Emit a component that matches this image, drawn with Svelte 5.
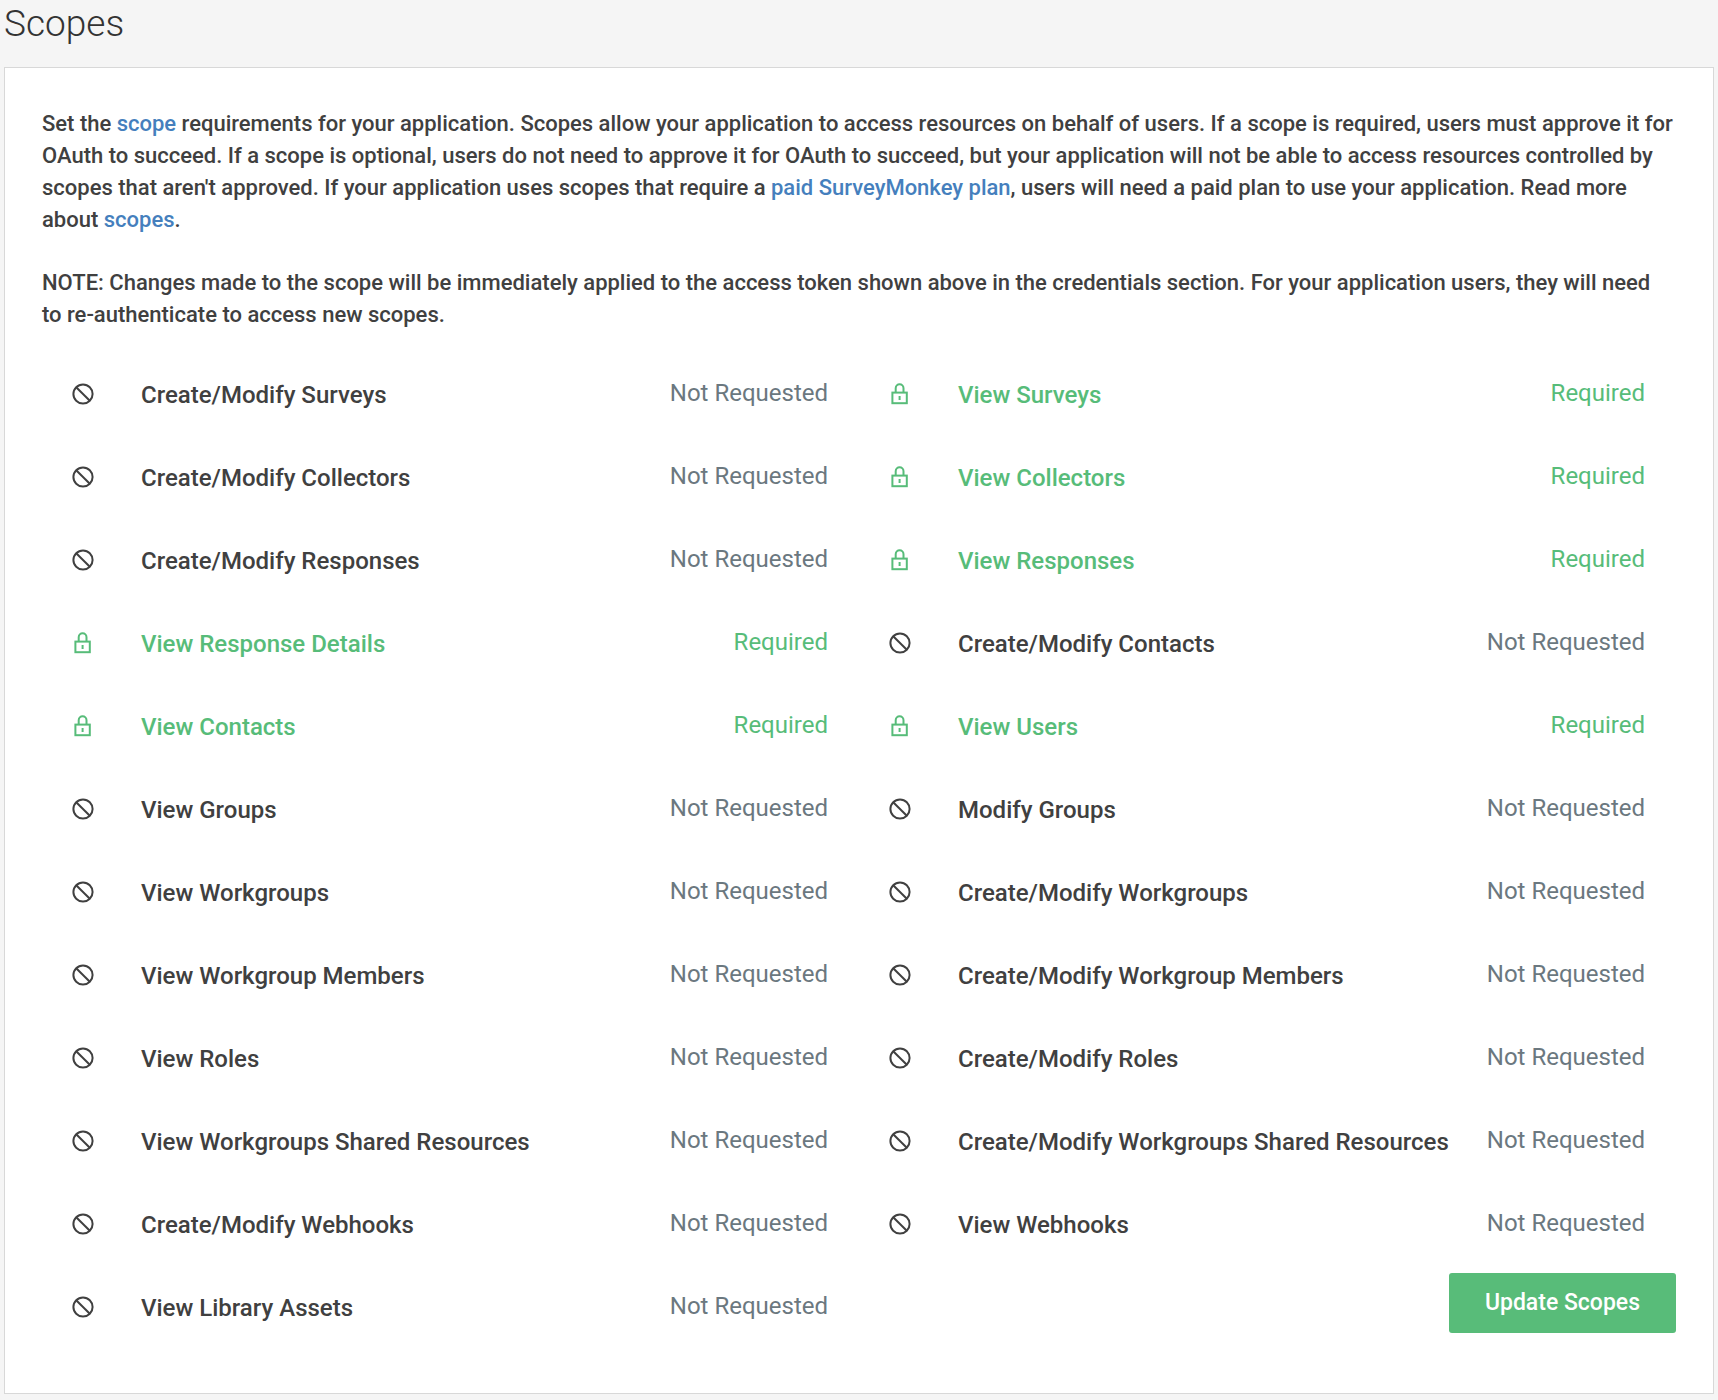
<script>
  const scopes = [
    ['Create/Modify Surveys', false],
    ['View Surveys', true],
    ['Create/Modify Collectors', false],
    ['View Collectors', true],
    ['Create/Modify Responses', false],
    ['View Responses', true],
    ['View Response Details', true],
    ['Create/Modify Contacts', false],
    ['View Contacts', true],
    ['View Users', true],
    ['View Groups', false],
    ['Modify Groups', false],
    ['View Workgroups', false],
    ['Create/Modify Workgroups', false],
    ['View Workgroup Members', false],
    ['Create/Modify Workgroup Members', false],
    ['View Roles', false],
    ['Create/Modify Roles', false],
    ['View Workgroups Shared Resources', false],
    ['Create/Modify Workgroups Shared Resources', false],
    ['Create/Modify Webhooks', false],
    ['View Webhooks', false],
    ['View Library Assets', false],
  ].map(([name, required]) => ({ name, required }));
</script>

<main>
  <h1>Scopes</h1>
  <section class="panel">
    <p>
      Set the <a href="#scope">scope</a> requirements for your application. Scopes allow your application to access
      resources on behalf of users. If a scope is required, users must approve it for
      OAuth to succeed. If a scope is optional, users do not need to approve it for OAuth to succeed, but your
      application will not be able to access resources controlled by
      scopes that aren't approved. If your application uses scopes that require a
      <a href="#plan">paid SurveyMonkey plan</a>, users will need a paid plan to use your application. Read more
      about <a href="#scopes">scopes</a>.
    </p>
    <p>
      NOTE: Changes made to the scope will be immediately applied to the access token shown above in the credentials
      section. For your application users, they will need
      to&nbsp;re-authenticate to access new scopes.
    </p>

    <ul class="grid">
      {#each scopes as scope}
        <li class="scope" class:required={scope.required}>
          {#if scope.required}
            <svg class="icon" viewBox="0 0 22 22" aria-hidden="true">
              <rect x="3.4" y="9.6" width="14.4" height="10.6" />
              <path d="M6.7 9.6V5.2a3.9 3.9 0 0 1 7.8 0v4.4M10.6 13v4" />
            </svg>
          {:else}
            <svg class="icon" viewBox="0 0 22 22" aria-hidden="true">
              <circle cx="11" cy="11" r="9.6" />
              <path d="M4.2 4.2l13.6 13.6" />
            </svg>
          {/if}
          <span class="name">{scope.name}</span>
          <span class="status">{scope.required ? 'Required' : 'Not Requested'}</span>
        </li>
      {/each}
      <li class="action"><button type="button">Update Scopes</button></li>
    </ul>
  </section>
</main>

<style>
  :global(body) {
    background: #f5f5f5;
  }
  main {
    padding: 0 4px 6px;
    font-family: Roboto, 'Liberation Sans', sans-serif;
    color: #404040;
  }
  h1 {
    margin: 0;
    padding: 2px 0 21px;
    font-size: 37px;
    line-height: 44px;
    font-weight: 300;
    color: #333;
  }
  .panel {
    padding: 40px 37px 45px;
    border: 1px solid #d8d8d8;
    background: #fff;
  }
  p {
    margin: 0 0 21px;
    font-size: 22px;
    line-height: 32px;
    font-weight: 500;
  }
  p + p {
    margin-top: 31px;
  }
  a {
    color: #457fbd;
    text-decoration: none;
  }
  .grid {
    display: grid;
    grid-template-columns: 1fr 1fr;
    grid-auto-rows: 83px;
    margin: 0;
    padding: 0;
    list-style: none;
  }
  .scope {
    display: flex;
    align-items: center;
    padding: 0 31px 0 30px;
    white-space: nowrap;
  }
  .icon {
    flex: none;
    width: 22px;
    height: 22px;
    fill: none;
    stroke: currentColor;
    stroke-width: 2;
  }
  .name {
    flex: 1;
    padding: 2px 0 0 47px;
    font-size: 24px;
    line-height: 32px;
    font-weight: 500;
  }
  .status {
    padding-bottom: 2px;
    font-size: 24px;
    line-height: 32px;
    color: #6b787f;
  }
  .required,
  .required .status {
    color: #57bc79;
  }
  .action {
    display: flex;
    justify-content: flex-end;
    align-items: center;
    padding-bottom: 8px;
  }
  button {
    height: 60px;
    padding: 0 36px;
    border: 0;
    border-radius: 3px;
    background: #58bc79;
    color: #fff;
    font: 500 23px/32px Roboto, 'Liberation Sans', sans-serif;
  }
</style>
